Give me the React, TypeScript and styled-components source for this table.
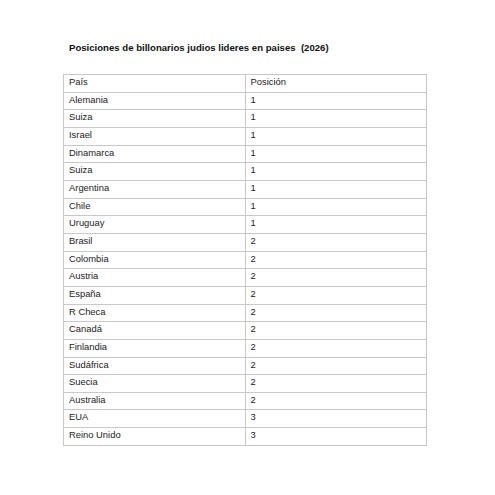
import React from "react";
import styled, { createGlobalStyle } from "styled-components";

const GlobalStyle = createGlobalStyle`
  html, body {
    margin: 0;
    padding: 0;
    background: #ffffff;
  }
  body {
    font-family: "Liberation Sans", Arial, sans-serif;
    color: #1a1a1a;
  }
`;

const Page = styled.div`
  width: 495px;
  height: 495px;
  box-sizing: border-box;
  padding: 43px 68px 0 63px;
`;

const Title = styled.h1`
  margin: 0 0 21px 6px;
  font-size: 9.6px;
  font-weight: bold;
  line-height: 10px;
  color: #111;
  white-space: pre;
`;

const Table = styled.table`
  width: 364px;
  border-collapse: collapse;
  table-layout: fixed;
`;

const Row = styled.tr`
  height: 17.67px;
`;

const Cell = styled.td`
  border: 1px solid #c8c8c8;
  padding: 1px 5px 0 5px;
  vertical-align: top;
  font-size: 9.4px;
  line-height: 11px;
  color: #222;
  width: 50%;
`;

type Entry = { country: string; position: number };

const entries: Entry[] = [
  { country: "Alemania", position: 1 },
  { country: "Suiza", position: 1 },
  { country: "Israel", position: 1 },
  { country: "Dinamarca", position: 1 },
  { country: "Suiza", position: 1 },
  { country: "Argentina", position: 1 },
  { country: "Chile", position: 1 },
  { country: "Uruguay", position: 1 },
  { country: "Brasil", position: 2 },
  { country: "Colombia", position: 2 },
  { country: "Austria", position: 2 },
  { country: "España", position: 2 },
  { country: "R Checa", position: 2 },
  { country: "Canadá", position: 2 },
  { country: "Finlandia", position: 2 },
  { country: "Sudáfrica", position: 2 },
  { country: "Suecia", position: 2 },
  { country: "Australia", position: 2 },
  { country: "EUA", position: 3 },
  { country: "Reino Unido", position: 3 },
];

export default function App() {
  return (
    <>
      <GlobalStyle />
      <Page>
        <Title>Posiciones de billonarios judios lideres en paises  (2026)</Title>
        <Table>
          <tbody>
            <Row>
              <Cell>País</Cell>
              <Cell>Posición</Cell>
            </Row>
            {entries.map((e, i) => (
              <Row key={i}>
                <Cell>{e.country}</Cell>
                <Cell>{e.position}</Cell>
              </Row>
            ))}
          </tbody>
        </Table>
      </Page>
    </>
  );
}
